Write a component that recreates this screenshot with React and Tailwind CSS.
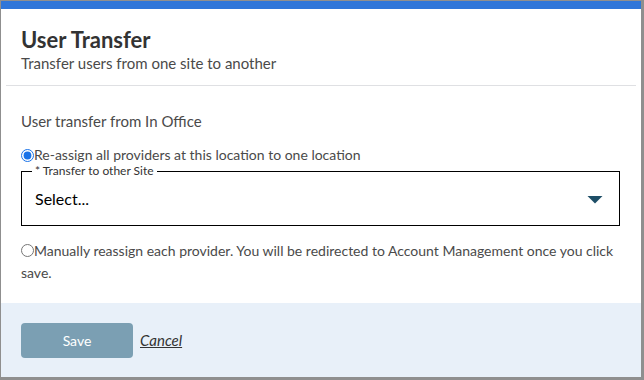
import React from "react";

const UserTransferModal = () => {
  return (
    <div className="w-[644px] h-[380px] bg-[#8f8f8f] pt-px pl-px pr-[3px] pb-[3px] font-['Lato',sans-serif]">
      <div className="h-full w-full bg-white flex flex-col">
        <div className="h-[8px] bg-[#2f76d9]" />
        <div className="px-[15px] pt-[18px] pb-[13px] mx-[5px] border-b border-[#dfe0e3]">
          <h1 className="text-[22px] leading-[26px] font-bold text-[#333333]">User Transfer</h1>
          <p className="mt-[1px] text-[15px] leading-[18px] text-[#4a4a4a]">
            Transfer users from one site to another
          </p>
        </div>
        <div className="flex-1 px-[20px] pt-[26px] text-[14px] text-[#4a4a4a]">
          <p className="text-[15px] leading-[18px]">User transfer from In Office</p>
          <label className="flex items-center mt-[16px] leading-[18px]">
            <input type="radio" name="mode" defaultChecked className="m-0 w-[13px] h-[13px] accent-[#1a73e8]" />
            <span>Re-assign all providers at this location to one location</span>
          </label>
          <fieldset className="border border-black mt-[1px] mr-[1px] px-[13px]">
            <legend className="text-[12px] leading-[12px] text-[#333] px-[3px] -ml-[3px]">
              * Transfer to other Site
            </legend>
            <div className="flex items-center justify-between h-[48px] pb-[4px] text-[16px] text-black">
              <span>Select...</span>
              <svg width="16" height="8" viewBox="0 0 16 8" className="mr-[3px] mt-[1px]">
                <path d="M0.5 0 H15.5 L8 7.5 Z" fill="#1e4e67" />
              </svg>
            </div>
          </fieldset>
          <label className="flex items-start mt-[14px] leading-[22px]">
            <input type="radio" name="mode" className="m-0 mt-[4px] w-[13px] h-[13px] shrink-0" />
            <span className="-ml-[13px] indent-[13px]">
              Manually reassign each provider. You will be redirected to Account Management once you click save.
            </span>
          </label>
        </div>
        <div className="h-[74px] bg-[#e8f0f9] px-[20px] flex items-center gap-[7px]">
          <button className="w-[112px] h-[35px] rounded-[4px] bg-[#7b9fb3] text-white text-[14px]">
            Save
          </button>
          <a className="text-[15px] italic underline text-[#333]">Cancel</a>
        </div>
      </div>
    </div>
  );
};

export default function App() {
  return <UserTransferModal />;
}
